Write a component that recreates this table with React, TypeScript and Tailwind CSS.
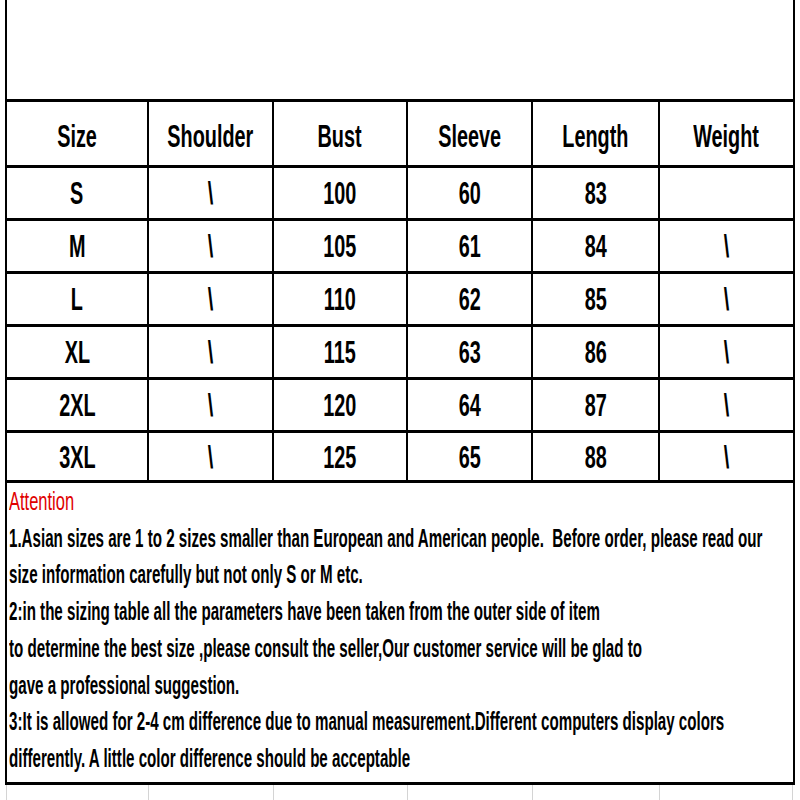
const cols = ['w-[142px]', 'w-[125px]', 'w-[134px]', 'w-[125px]', 'w-[127px]', 'w-[133px]'];

const header = ['Size', 'Shoulder', 'Bust', 'Sleeve', 'Length', 'Weight'];

const rows = [
  ['S', '\\', '100', '60', '83', ''],
  ['M', '\\', '105', '61', '84', '\\'],
  ['L', '\\', '110', '62', '85', '\\'],
  ['XL', '\\', '115', '63', '86', '\\'],
  ['2XL', '\\', '120', '64', '87', '\\'],
  ['3XL', '\\', '125', '65', '88', '\\'],
];

const notes = [
  '1.Asian sizes are 1 to 2 sizes smaller than European and American people.  Before order, please read our',
  'size information carefully but not only S or M etc.',
  '2:in the sizing table all the parameters have been taken from the outer side of item',
  'to determine the best size ,please consult the seller,Our customer service will be glad to',
  'gave a professional suggestion.',
  '3:It is allowed for 2-4 cm difference due to manual measurement.Different computers display colors',
  'differently. A little color difference should be acceptable',
];

function Row({ cells, h, head }: { cells: string[]; h: string; head?: boolean }) {
  return (
    <div className={`flex border-t-[3px] border-black ${h}`}>
      {cells.map((c, i) => (
        <div
          key={i}
          className={`${cols[i]} shrink-0 flex items-center justify-center ${head ? 'pt-[5px]' : ''} ${i < 5 ? 'border-r-2 border-black' : ''}`}
        >
          <span className="inline-block whitespace-nowrap scale-x-[0.62] font-bold text-[32px] leading-none text-black">
            {c}
          </span>
        </div>
      ))}
    </div>
  );
}

export default function App() {
  return (
    <div
      className="w-[800px] h-[800px] bg-white overflow-hidden"
      style={{ fontFamily: '"Liberation Sans", Arial, sans-serif' }}
    >
      <div className="ml-[5px] w-[790px] border-l-2 border-r-2 border-b-[3px] border-black">
        <div className="h-[99px]" />
        <Row cells={header} h="h-[66px]" head />
        {rows.map((r, i) => (
          <Row key={r[0]} cells={r} h={i === 5 ? 'h-[50px]' : 'h-[53px]'} />
        ))}
        <div className="border-t-[3px] border-black h-[302px] pl-[2px]">
          <div className="origin-left scale-x-[0.66] whitespace-nowrap text-[25px] leading-[36.7px] text-[#e00000]">
            Attention
          </div>
          {notes.map((n) => (
            <div key={n} className="origin-left scale-x-[0.605] whitespace-pre font-bold text-[25px] leading-[36.7px] text-black">
              {n}
            </div>
          ))}
        </div>
      </div>
      <div className="flex h-[20px]">
        <div className="w-[7px] shrink-0 border-r border-[#d4d4d4]" />
        {cols.map((c, i) => (
          <div key={i} className={`${c} shrink-0 border-r border-[#d4d4d4]`} />
        ))}
      </div>
    </div>
  );
}
